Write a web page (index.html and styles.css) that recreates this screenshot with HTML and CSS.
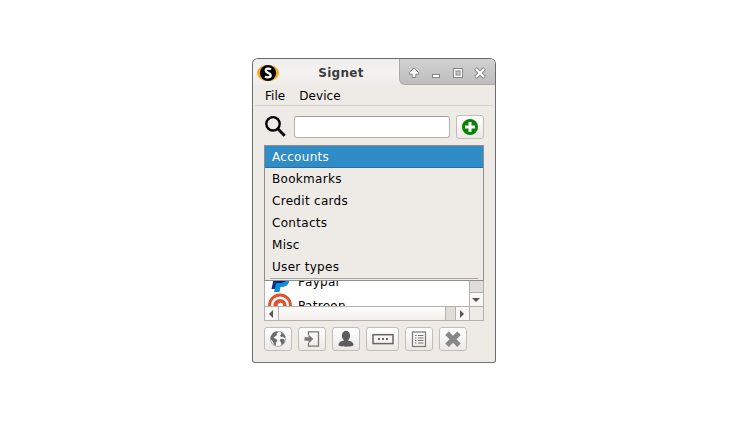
FILE: index.html
```html
<!DOCTYPE html>
<html lang="en">
<head>
<meta charset="utf-8">
<title>Signet</title>
<link rel="stylesheet" href="styles.css">
</head>
<body>
<main class="window">
  <header class="titlebar">
    <svg class="logo" width="24" height="18" viewBox="0 0 24 18"><ellipse cx="12" cy="9" rx="11" ry="8" fill="#f9a91b"/><circle cx="12" cy="9" r="8" fill="#000"/><path d="M15 5.300C13 4.200 9.700 4.200 9.700 6.500c0 2.800 5 1.900 5 4.700 0 2.400-3.300 2.600-5.700 1.300" fill="none" stroke="#fff" stroke-width="2.300"/></svg>
    <h1 class="title">Signet</h1>
    <div class="controls">
      <svg width="12" height="12" viewBox="0 0 12 12"><path d="M6 1 1.300 5.700v1.500h2.900v3.300h3.600V7.200h2.900V5.700z" fill="#fff" stroke="#858585"/></svg>
      <svg width="12" height="12" viewBox="0 0 12 12"><rect x="2.500" y="7.500" width="7" height="3" fill="#fff" stroke="#858585"/></svg>
      <svg width="12" height="12" viewBox="0 0 12 12"><rect x="1.500" y="1.500" width="9" height="9" fill="#fff" stroke="#858585"/><rect x="4" y="4" width="4" height="4" fill="#ccc" stroke="#858585"/></svg>
      <svg width="12" height="12" viewBox="0 0 12 12"><path d="m1.500 1.500 9 9m0-9-9 9" stroke="#858585" stroke-width="4"/><path d="m2 2 8 8m0-8-8 8" stroke="#fff" stroke-width="2.200"/></svg>
    </div>
  </header>
  <nav class="menubar"><span>File</span><span>Device</span></nav>
  <div class="search">
    <svg class="lens" width="22" height="22" viewBox="0 0 22 22" fill="none" stroke="#000"><circle cx="9" cy="8.800" r="6.700" stroke-width="2.400"/><path d="m13.500 13.500 7.200 7.200" stroke-width="3"/></svg>
    <input class="field" type="text" aria-label="Search">
    <button class="btn add" aria-label="Add"><svg width="16" height="16" viewBox="0 0 16 16"><circle cx="8" cy="8" r="8" fill="#078207"/><path d="M8 3v10M3 8h10" stroke="#fff" stroke-width="3"/></svg></button>
  </div>
  <section class="browser">
    <div class="rows">
      <div class="row"><svg width="24" height="23" viewBox="0 0 24 23"><path d="M7 3h12v8H12l-2 8H3.500z" fill="#003087"/><path d="M20 7c3.500 5-1 10-6 10h-1.500L11.500 22H6l2.200-9H13c4 0 6-2 7-6z" fill="#0a8fdc"/><path d="M8.500 13H13c3 0 4.500-1 5.500-2.500V8h-9z" fill="#00206a"/></svg>Paypal</div>
      <div class="row"><svg width="24" height="24" viewBox="0 0 24 24"><circle cx="12" cy="12.500" r="10.500" fill="#fff" stroke="#e2502c" stroke-width="2.800"/><circle cx="12" cy="12.500" r="6.600" fill="#e2502c"/><circle cx="12.500" cy="12.500" r="2.700" fill="#fff"/></svg>Patreon</div>
    </div>
    <div class="vscroll"><i class="down"></i></div>
    <div class="hscroll"><i class="step left"></i><i class="thumb"></i><i class="trough"></i><i class="step right"></i></div>
    <div class="corner"></div>
    <ul class="popup">
      <li class="selected">Accounts</li>
      <li>Bookmarks</li>
      <li>Credit cards</li>
      <li>Contacts</li>
      <li>Misc</li>
      <li>User types</li>
    </ul>
  </section>
  <footer class="toolbar">
    <button class="btn" aria-label="Web"><svg width="18" height="18" viewBox="0 0 18 18"><circle cx="9" cy="9" r="7.500" fill="#f8f8f8" stroke="#aaa"/><path d="M1.500 7 4 3l3.500-1.800 1.500 1-1.500 1.600.5 1.200-2 1.400-1.500 1.600 2.500.8 1.500 2-1.800 2 .3 2.700-2-.7-1-3L2 9.500zM11.500 1.600l2.800 1.600L16.500 7l-1.300 1-1.400-1.400-1.600.6-1.200-1.600L12.500 4zM11.500 9l2.500-.2 1.800 1.500-.8 2.700-2.400 2.400-.6-3-1.200-1.800z" fill="#6a6a6a"/></svg></button>
    <button class="btn" aria-label="Open"><svg width="18" height="18" viewBox="0 0 18 18"><path d="M5.500 5V1.800h10v14.400h-10V13" fill="none" stroke="#777" stroke-width="1.300"/><path d="M1.500 7.300h4V4.600L10.300 9l-4.800 4.400v-2.700h-4z" fill="#777"/></svg></button>
    <button class="btn" aria-label="User"><svg width="18" height="18" viewBox="0 0 18 18"><ellipse cx="9" cy="5.700" rx="4.100" ry="5" fill="#5d5d5d"/><path d="M7 9h4v1.500c3.500.6 5.500 2 5.500 4.500 0 2.200-15 2.200-15 0 0-2.500 2-3.900 5.500-4.500z" fill="#5d5d5d"/></svg></button>
    <button class="btn wide" aria-label="Password"><svg width="22" height="18" viewBox="0 0 22 18"><rect x="1" y="4.700" width="20" height="8.900" fill="none" stroke="#666" stroke-width="1.500"/><path d="M6 8h2v2H6zm4 0h2v2h-2zm4 0h2v2h-2z" fill="#666"/></svg></button>
    <button class="btn" aria-label="Details"><svg width="18" height="18" viewBox="0 0 18 18" fill="none" stroke="#777"><rect x="2.500" y="2" width="13" height="14.500" stroke-width="1.200"/><path d="M5 5.500h1.500M5 8h1.500M5 10.500h1.500M5 13h1.500M8 5.500h5.500M8 8h5.500M8 10.500h5.500M8 13h5.500"/></svg></button>
    <button class="btn" aria-label="Delete"><svg width="18" height="18" viewBox="0 0 18 18"><path d="m3 3.200 12 12M15 3.200l-12 12" stroke="#888" stroke-width="5"/></svg></button>
  </footer>
</main>
</body>
</html>
```
FILE: styles.css
```css
* { box-sizing: border-box; }
body {
  margin: 0;
  min-height: 421px;
  padding: 58px 0 0 252px;
  background: #fff;
  color: #000;
  font: 12px "DejaVu Sans", sans-serif;
  letter-spacing: 0.3px;
}
svg { display: block; flex: none; }
.window {
  width: 244px;
  height: 305px;
  border: 1px solid #686c6e;
  border-bottom-color: #74777a;
  border-radius: 6px 6px 3px 3px;
  background: #eeebe7;
  overflow: hidden;
}
.titlebar {
  display: flex;
  height: 27px;
  background: linear-gradient(#ededed, #f4f3f2 50%, #eeebe7);
}
.logo { margin: 5px 0 0 3px; }
.title {
  flex: 1;
  margin: 0;
  padding-left: 3px;
  color: #3c3c3c;
  font-size: 12px;
  line-height: 28px;
  letter-spacing: 0.25px;
  text-align: center;
}
.controls {
  display: flex;
  align-items: center;
  gap: 10px;
  width: 96px;
  height: 26px;
  padding: 2px 0 0 8px;
  border: solid #aaa;
  border-width: 0 0 1px 1px;
  border-radius: 0 0 0 6px;
  background: linear-gradient(#d2d2d2, #bdbdbd);
}
.menubar {
  display: flex;
  gap: 14px;
  height: 20px;
  margin: 0 2px;
  padding-left: 10px;
  border-bottom: 1px solid #d6d3cf;
  line-height: 20px;
  letter-spacing: 0.05px;
}
.search {
  display: flex;
  align-items: center;
  height: 24px;
  margin: 9px 11px 6px;
}
.lens { margin: -2px 8px 0 0; }
.field {
  width: 156px;
  height: 22px;
  margin: 0 6px 0 0;
  border: 1px solid #b5b2af;
  border-top-color: #9f9c99;
  border-radius: 3px;
  background: #fff;
}
.btn {
  display: flex;
  align-items: center;
  justify-content: center;
  width: 28px;
  height: 24px;
  padding: 0;
  border: 1px solid #c1beba;
  border-radius: 3px;
  background: linear-gradient(#fff, #ebe9e6);
}
.browser {
  position: relative;
  display: grid;
  grid-template: 161px 14px / 205px 15px;
  width: 220px;
  height: 176px;
  margin-left: 11px;
  border-bottom: 1px solid #b3b0ad;
}
.rows {
  display: flex;
  flex-direction: column;
  justify-content: flex-end;
  height: 161px;
  overflow: hidden;
  border-left: 1px solid #b3b0ad;
  background: #fff;
}
.row {
  display: flex;
  gap: 6px;
  flex: none;
  height: 23px;
  padding-left: 3px;
  line-height: 24px;
}
.row:last-child { height: 13px; line-height: 26px; }
.vscroll {
  display: flex;
  align-items: flex-end;
  border: solid #b3b0ad;
  border-width: 0 1px;
  background: #dfddda;
}
.down, .step {
  display: grid;
  place-items: center;
  width: 13px;
  height: 13px;
  background: #f8f7f6;
}
.down { height: 14px; padding-right: 1px; border-top: 1px solid #b3b0ad; }
.left, .right { padding-right: 2px; }
.down::before, .step::before {
  content: "";
  border: solid transparent;
}
.down::before { border-width: 4px 4px 0; border-top-color: #555; }
.left::before { border-width: 4px 4px 4px 0; border-right-color: #555; }
.right::before { border-width: 4px 0 4px 4px; border-left-color: #555; }
.hscroll {
  display: flex;
  border: solid #b3b0ad;
  border-width: 1px 0 0 1px;
}
.thumb {
  flex: 1;
  border: solid #b3b0ad;
  border-width: 0 1px;
  background: linear-gradient(#fff, #f1eeeb);
}
.trough { width: 9px; background: #dfddda; }
.right { width: 14px; border-left: 1px solid #b3b0ad; }
.corner {
  border: solid #b3b0ad;
  border-width: 1px 1px 0;
  background: #eeebe7;
}
.popup {
  position: absolute;
  inset: 0 0 auto;
  height: 136px;
  margin: 0;
  padding: 0;
  border: 1px solid #8f8f8b;
  background: #eeebe7;
  list-style: none;
}
.popup li { height: 22px; padding-left: 7px; line-height: 22px; }
.popup .selected { background: #308cc6; color: #fff; box-shadow: inset 0 -1px #2470a0; }
.popup::after {
  content: "";
  display: block;
  margin: 0 5px;
  border-top: 1px solid #aaa8a5;
}
.toolbar { display: flex; gap: 6px; margin: 6px 11px 0; }
.wide { width: 33px; }
```
